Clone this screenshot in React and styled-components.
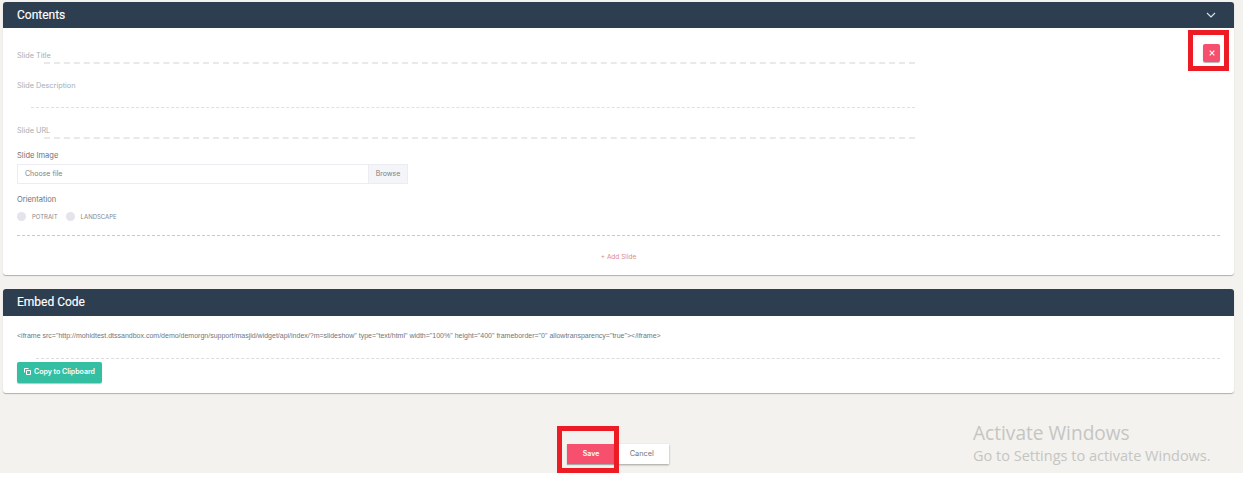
import React from "react";
import styled, { createGlobalStyle } from "styled-components";

const Global = createGlobalStyle`
  html, body { margin: 0; padding: 0; background: #fff; }
  body { font-family: "Inter", "Liberation Sans", sans-serif; }
  #root { width: 1243px; height: 477px; overflow: hidden; position: relative; }
`;

const Page = styled.div`
  width: 1243px;
  height: 473px;
  background: #f3f2ee;
  padding: 2px 9px 0 3px;
  box-sizing: border-box;
  display: flex;
  flex-direction: column;
  position: relative;
`;

const Card = styled.section`
  background: #fff;
  border-radius: 3px;
  box-shadow: 0 1px 1px rgba(0, 0, 0, 0.28);
  margin-bottom: ${(p) => p.$gap}px;
  overflow: hidden;
`;

const CardHeader = styled.header`
  height: ${(p) => p.$h}px;
  background: #2d3e50;
  color: #fff;
  padding: 0 18px ${(p) => p.$nudge}px 14px;
  box-sizing: border-box;
  display: flex;
  align-items: center;
  justify-content: space-between;
  font: 400 12px/1 "Roboto", sans-serif;
  -webkit-text-stroke: 0.15px #fff;
  & > svg { display: block; }
`;

const Contents = styled.div`
  padding: 0 14px;
  display: flex;
  flex-direction: column;
  position: relative;
  height: 247px;
`;

const LineField = styled.div`
  height: ${(p) => p.$h}px;
  display: flex;
  align-items: flex-start;
  position: relative;
  font: 400 7.3px/10px "Inter", sans-serif;
  color: #a7adb4;
`;

const FieldLabel = styled.span`
  position: absolute;
  left: 0;
  top: ${(p) => p.$top}px;
`;

const Dash = styled.div`
  position: absolute;
  left: ${(p) => p.$left}px;
  width: ${(p) => 898 - p.$left}px;
  top: ${(p) => p.$top}px;
  border-top: ${(p) => p.$t}px dashed ${(p) => (p.$t > 1 ? "#e9e9e9" : "#e0e0e0")};
`;

const DarkLabel = styled.div`
  font: 400 7.5px/10px "Inter", sans-serif;
  color: #6d7178;
`;

const FileRow = styled.div`
  display: flex;
  width: 391px;
  height: 20px;
  margin: 3px 0 11px;
  box-sizing: border-box;
  border: 1px solid #ebedf2;
  font: 400 7px/18px "Inter", sans-serif;
  color: #7b7f86;
`;

const FileName = styled.div`
  flex: 1;
  padding-left: 7px;
`;

const BrowseBtn = styled.div`
  width: 38px;
  background: #f4f5f8;
  border-left: 1px solid #ebedf2;
  text-align: center;
`;

const RadioRow = styled.div`
  display: flex;
  align-items: center;
  margin-top: 7px;
  height: 9px;
  font: 400 6px/9px "Inter", sans-serif;
  color: #85898f;
`;

const Radio = styled.span`
  width: 9px;
  height: 9px;
  border-radius: 50%;
  background: #e3e4ec;
  margin-right: 6px;
`;

const RadioText = styled.span`
  margin-right: 8px;
`;

const Divider = styled.div`
  border-top: 1px dashed ${(p) => p.$c};
  margin-top: ${(p) => p.$top}px;
  margin-left: ${(p) => p.$left || 0}px;
`;

const AddSlide = styled.div`
  text-align: center;
  margin-top: 16px;
  font: 400 6.5px/10px "Inter", sans-serif;
  color: #e0897c;
`;

const CloseBtn = styled.button`
  position: absolute;
  right: 14px;
  top: 16px;
  width: 17px;
  height: 18px;
  padding: 0;
  border: 0;
  border-radius: 2px;
  background: #f7506f;
  box-shadow: 0 1px 1px rgba(0, 0, 0, 0.3);
  display: flex;
  align-items: center;
  justify-content: center;
`;

const EmbedBody = styled.div`
  height: 77px;
  padding: 0 14px;
  box-sizing: border-box;
`;

const Code = styled.div`
  padding-top: 15px;
  font: 400 7px/10px "Liberation Sans", sans-serif;
  color: #72767c;
  white-space: nowrap;
`;

const CopyBtn = styled.button`
  margin-top: 3px;
  width: 85px;
  height: 21px;
  border: 0;
  padding: 0 0 2px;
  border-radius: 2px;
  background: #34bfa3;
  color: #fff;
  font: 600 7px/1 "Inter", sans-serif;
  box-shadow: 0 1px 1px rgba(0, 0, 0, 0.25);
  display: flex;
  align-items: center;
  justify-content: center;
  gap: 3px;
`;

const Actions = styled.div`
  display: flex;
  margin: 51px 0 0 564px;
`;

const SaveBtn = styled.button`
  width: 48px;
  height: 20px;
  border: 0;
  padding: 0 0 1px;
  background: #f7506f;
  color: #fff;
  font: 600 7px/1 "Inter", sans-serif;
  box-shadow: 0 1px 1px rgba(0, 0, 0, 0.3);
`;

const CancelBtn = styled.button`
  width: 53.5px;
  height: 20px;
  border: 0;
  padding: 0 0 1px;
  background: #fff;
  color: #6f7379;
  font: 400 7.3px/1 "Inter", sans-serif;
  box-shadow: 0 1px 2px rgba(0, 0, 0, 0.35);
`;

const Highlight = styled.div`
  position: absolute;
  box-sizing: border-box;
  left: ${(p) => p.$x}px;
  top: ${(p) => p.$y}px;
  width: ${(p) => p.$w}px;
  height: ${(p) => p.$h}px;
  border: 5px solid #ed1c24;
  pointer-events: none;
`;

const Watermark = styled.div`
  position: absolute;
  left: 973px;
  top: 422px;
  color: #c5c5c3;
  font-family: "Open Sans", sans-serif;
`;

const WatermarkTitle = styled.div`
  font-size: 19.1px;
  line-height: 22px;
`;

const WatermarkSub = styled.div`
  font-size: 14.5px;
  line-height: 23px;
`;

const code = `<iframe src="http://mohidtest.dtssandbox.com/demo/demorgn/support/masjid/widget/api/index/?m=slideshow" type="text/html" width="100%" height="400" frameborder="0" allowtransparency="true"></iframe>`;

export default function App() {
  return (
    <>
      <Global />
      <Page>
        <Card $gap={14}>
          <CardHeader $h={26} $nudge={0}>
            Contents
            <svg width="10" height="6" viewBox="0 0 10 6" fill="none" stroke="#d8e4ea" strokeWidth="1.1">
              <path d="M1 1l4 4 4-4" />
            </svg>
          </CardHeader>
          <Contents>
            <LineField $h={30}><FieldLabel $top={23}>Slide Title</FieldLabel><Dash $left={27} $top={34} $t={2} /></LineField>
            <LineField $h={45}><FieldLabel $top={23}>Slide Description</FieldLabel><Dash $left={14} $top={49} $t={1} /></LineField>
            <LineField $h={48}><FieldLabel $top={23}>Slide URL</FieldLabel><Dash $left={27} $top={34} $t={2} /></LineField>
            <DarkLabel>Slide Image</DarkLabel>
            <FileRow><FileName>Choose file</FileName><BrowseBtn>Browse</BrowseBtn></FileRow>
            <DarkLabel>Orientation</DarkLabel>
            <RadioRow>
              <Radio /><RadioText>POTRAIT</RadioText>
              <Radio /><RadioText>LANDSCAPE</RadioText>
            </RadioRow>
            <Divider $c="#c9c8d4" $top={14} />
            <AddSlide>+ Add Slide</AddSlide>
            <CloseBtn aria-label="Remove">
              <svg width="6" height="6" viewBox="0 0 6 6" stroke="#fff" strokeWidth="1.1"><path d="M.7.7l4.6 4.6M5.3.7L.7 5.3" /></svg>
            </CloseBtn>
          </Contents>
        </Card>
        <Card $gap={0}>
          <CardHeader $h={27} $nudge={1}>Embed Code</CardHeader>
          <EmbedBody>
            <Code>{code}</Code>
            <Divider $c="#dcdcdc" $top={17} $left={19} />
            <CopyBtn>
              <svg width="7" height="7" viewBox="0 0 7 7" fill="none" stroke="#fff" strokeWidth="1"><path d="M.5 4.5v-4h4M2.5 2.5h4v4h-4z" /></svg>
              Copy to Clipboard
            </CopyBtn>
          </EmbedBody>
        </Card>
        <Actions>
          <SaveBtn>Save</SaveBtn>
          <CancelBtn>Cancel</CancelBtn>
        </Actions>
        <Highlight $x={1188} $y={30} $w={41} $h={41} />
        <Highlight $x={557} $y={426} $w={62} $h={47} />
      </Page>
      <Watermark>
        <WatermarkTitle>Activate Windows</WatermarkTitle>
        <WatermarkSub>Go to Settings to activate Windows.</WatermarkSub>
      </Watermark>
    </>
  );
}
